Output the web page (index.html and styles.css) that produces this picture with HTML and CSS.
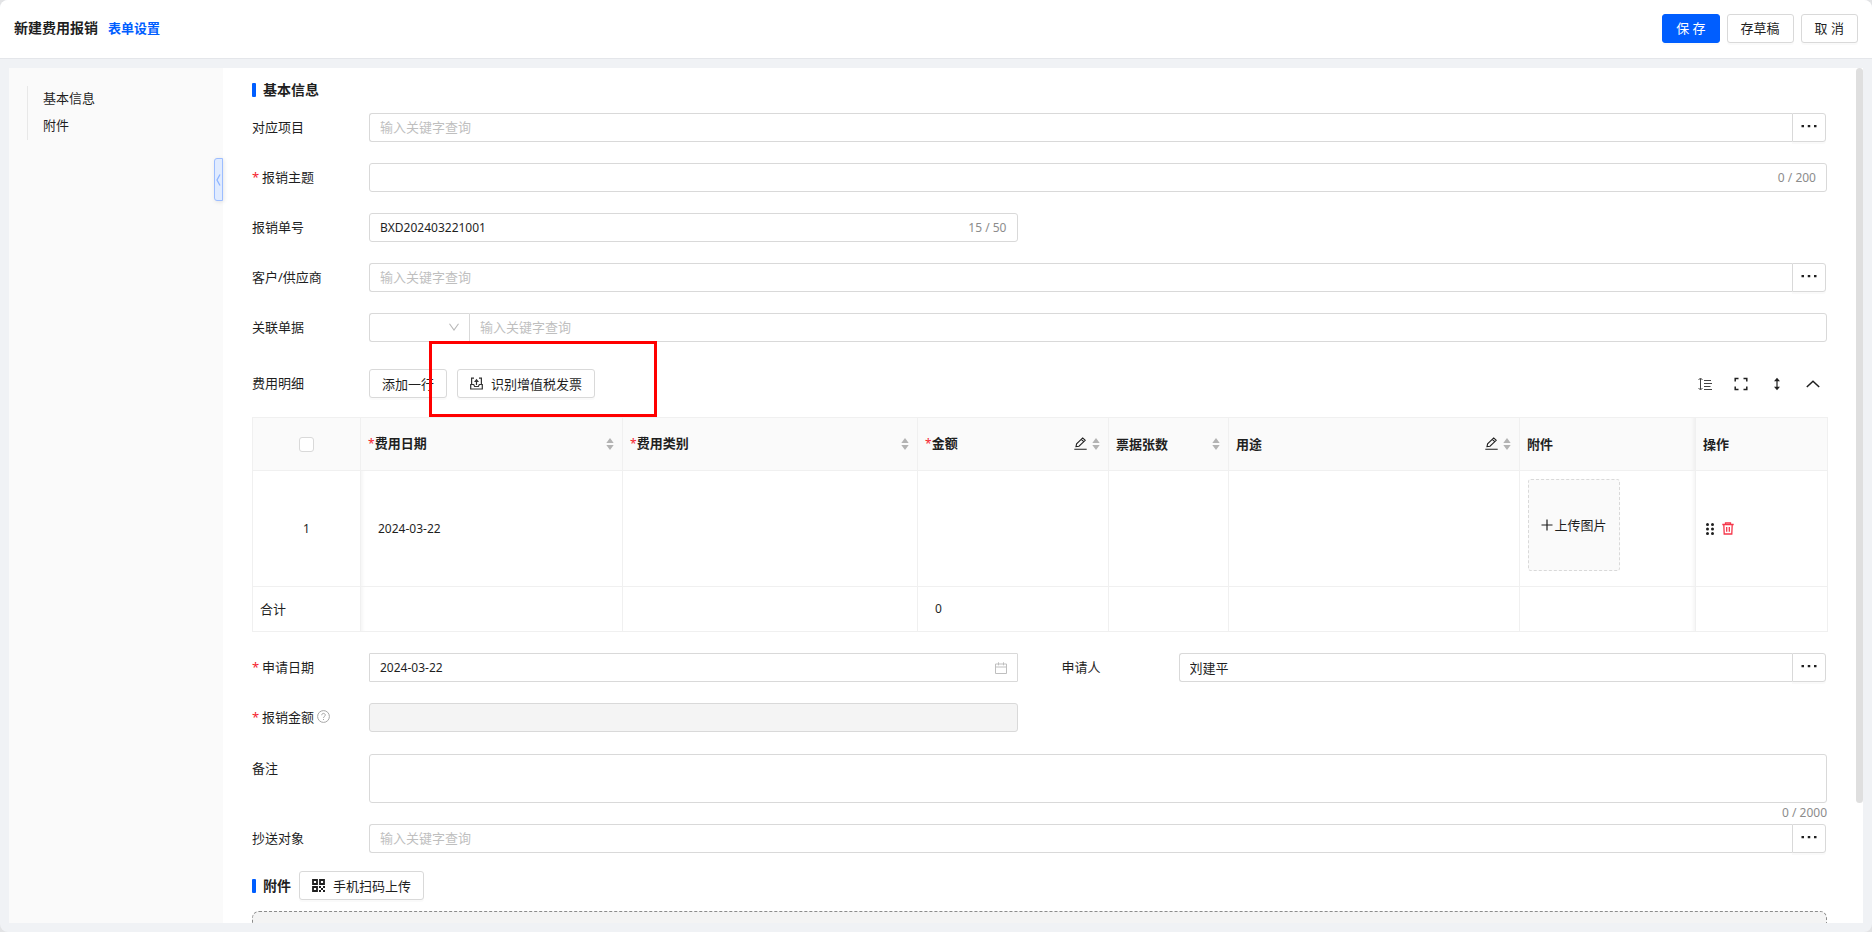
FILE: index.html
```html
<!DOCTYPE html>
<html lang="zh-CN">
<head>
<meta charset="utf-8">
<title>新建费用报销</title>
<link rel="stylesheet" href="styles.css">
</head>
<body>
<svg class="sprite" aria-hidden="true">
  <symbol id="sorter" viewBox="0 0 8 12"><path d="M4 0L7.700 5H.3zM4 12L.3 7H7.700z" fill="#b3b3b3"/></symbol>
  <symbol id="edit" viewBox="0 0 13 13"><path d="M.3 12.300H12.700M2 9.600L2.600 6.900 8.700.9 11.200 3.300 5 9.200zM7.300 2.300L9.700 4.600" fill="none" stroke="#1f1f1f" stroke-width="1.100"/></symbol>
  <symbol id="dots" viewBox="0 0 16 4"><path d="M.5 1H3V3.200H.5zM6.750 1H9.250V3.200H6.750zM13 1H15.500V3.200H13z" fill="#1f1f1f"/></symbol>
</svg>
<div class="app">
  <header class="topbar">
    <h1 class="topbar-title">新建费用报销</h1>
    <a class="topbar-link" href="#settings">表单设置</a>
    <div class="topbar-actions">
      <button class="btn btn-primary" type="button">保 存</button>
      <button class="btn" type="button">存草稿</button>
      <button class="btn" type="button">取 消</button>
    </div>
  </header>

  <div class="panel">
    <aside class="side">
      <nav class="anchors">
        <a href="#basic">基本信息</a>
        <a href="#files">附件</a>
      </nav>
      <button class="collapse" type="button" aria-label="收起">
        <svg width="5" height="12" viewBox="0 0 5 12"><path d="M4 .5L1 6l3 5.500" fill="none" stroke="#8fb5ff" stroke-width="1.300"/></svg>
      </button>
    </aside>

    <main class="content">
      <h2 class="section-title" id="basic">基本信息</h2>

      <form class="form">
        <div class="row">
          <label class="label" for="project">对应项目</label>
          <div class="group">
            <input class="field" id="project" type="text" placeholder="输入关键字查询">
            <button class="more" type="button" aria-label="更多"><svg width="16" height="4"><use href="#dots"/></svg></button>
          </div>
        </div>

        <div class="row">
          <label class="label required" for="subject">报销主题</label>
          <div class="box">
            <input class="bare" id="subject" type="text">
            <span class="count">0 / 200</span>
          </div>
        </div>

        <div class="halves">
          <div class="row">
            <label class="label" for="number">报销单号</label>
            <div class="box">
              <input class="bare" id="number" type="text" value="BXD202403221001">
              <span class="count">15 / 50</span>
            </div>
          </div>
        </div>

        <div class="row">
          <label class="label" for="customer">客户/供应商</label>
          <div class="group">
            <input class="field" id="customer" type="text" placeholder="输入关键字查询">
            <button class="more" type="button" aria-label="更多"><svg width="16" height="4"><use href="#dots"/></svg></button>
          </div>
        </div>

        <div class="row">
          <label class="label" for="related">关联单据</label>
          <div class="joined">
            <span class="select-wrap">
              <select class="select" aria-label="单据类型"><option></option></select>
              <svg class="select-arrow" width="10" height="8" viewBox="0 0 10 8"><path d="M.5 .8L5 7 9.500.8" fill="none" stroke="#b8b8b8" stroke-width="1.100"/></svg>
            </span>
            <input class="field" id="related" type="text" placeholder="输入关键字查询">
          </div>
        </div>

        <div class="detail">
          <div class="row">
            <span class="label">费用明细</span>
            <div class="toolbar">
              <button class="btn" type="button">添加一行</button>
              <div class="scan">
                <button class="btn" type="button">
                  <svg width="13" height="13" viewBox="0 0 13 13"><path d="M4 1.200H1.600V7.500M9 1.200H11.400V7.500M.7 7.500V12H12.300V7.500H9.300L8.400 9.500H4.600L3.700 7.500zM6.500 8V3.500" fill="none" stroke="#333" stroke-width="1.200"/><path d="M6.500 1.800L9 5H4z" fill="#333"/></svg>
                  识别增值税发票
                </button>
                <div class="highlight"></div>
              </div>
              <div class="tools">
                <button class="tool" type="button" aria-label="行高"><svg width="14" height="14" viewBox="0 0 14 14"><path d="M2.500 1.500V12.500M.5 3L2.500 1 4.500 3M.5 11L2.500 13 4.500 11M6 3.500H13M6 6.500H14M6 9.500H12.500M6 12.500H14" fill="none" stroke="#444"/></svg></button>
                <button class="tool" type="button" aria-label="全屏"><svg width="14" height="14" viewBox="0 0 14 14"><path d="M1.200 4.500V1.500H4.500M9.500 1.500H12.800V4.500M12.800 9.500V12.500H9.500M4.500 12.500H1.200V9.500" fill="none" stroke="#1f1f1f" stroke-width="1.500"/></svg></button>
                <button class="tool" type="button" aria-label="高度"><svg width="14" height="14" viewBox="0 0 14 14"><path d="M7 2V12" stroke="#1f1f1f" stroke-width="1.200"/><path d="M7 .8L10 4.200H4zM7 13.200L4 9.800H10z" fill="#1f1f1f"/></svg></button>
                <button class="tool" type="button" aria-label="折叠"><svg width="14" height="14" viewBox="0 0 14 14"><path d="M.8 10L7 4.200 13.200 10" fill="none" stroke="#1f1f1f" stroke-width="1.500"/></svg></button>
              </div>
            </div>
          </div>

          <table class="table">
            <colgroup>
              <col class="col-check"><col class="col-date"><col class="col-type"><col class="col-amount"><col class="col-bills"><col class="col-usage"><col class="col-files"><col class="col-ops">
            </colgroup>
            <thead>
              <tr>
                <th class="fixed-left"><input class="check" type="checkbox" aria-label="全选"></th>
                <th><div class="th"><span class="must">费用日期</span><svg class="sorter" width="8" height="12"><use href="#sorter"/></svg></div></th>
                <th><div class="th"><span class="must">费用类别</span><svg class="sorter" width="8" height="12"><use href="#sorter"/></svg></div></th>
                <th><div class="th"><span class="must">金额</span><svg width="13" height="13"><use href="#edit"/></svg><svg class="sorter" width="8" height="12"><use href="#sorter"/></svg></div></th>
                <th><div class="th"><span>票据张数</span><svg class="sorter" width="8" height="12"><use href="#sorter"/></svg></div></th>
                <th><div class="th"><span>用途</span><svg width="13" height="13"><use href="#edit"/></svg><svg class="sorter" width="8" height="12"><use href="#sorter"/></svg></div></th>
                <th class="before-ops">附件</th>
                <th class="ops">操作</th>
              </tr>
            </thead>
            <tbody>
              <tr>
                <td class="center">1</td>
                <td class="value after-check">2024-03-22</td>
                <td></td><td></td><td></td><td></td>
                <td class="before-ops">
                  <button class="upload" type="button"><svg width="12" height="12" viewBox="0 0 12 12"><path d="M6 .5V11.500M.5 6H11.500" stroke="#1f1f1f" stroke-width="1.200"/></svg>上传图片</button>
                </td>
                <td class="ops">
                  <div class="ops-icons">
                    <svg width="10" height="14" viewBox="0 0 10 14"><g fill="#1f1f1f"><circle cx="2.500" cy="2.500" r="1.500"/><circle cx="7.500" cy="2.500" r="1.500"/><circle cx="2.500" cy="7" r="1.500"/><circle cx="7.500" cy="7" r="1.500"/><circle cx="2.500" cy="11.500" r="1.500"/><circle cx="7.500" cy="11.500" r="1.500"/></g></svg>
                    <button class="tool" type="button" aria-label="删除"><svg width="12" height="13" viewBox="0 0 12 13"><path d="M.3 2.500H11.700M3.500 2.500V.9H8.500V2.500M1.800 2.500L2.200 12H9.800L10.200 2.500M4.700 5V9.800M7.300 5V9.800" fill="none" stroke="#f5364a" stroke-width="1.300"/></svg></button>
                  </div>
                </td>
              </tr>
            </tbody>
            <tfoot>
              <tr>
                <td>合计</td><td class="after-check"></td><td></td><td class="value">0</td><td></td><td></td><td class="before-ops"></td><td class="ops"></td>
              </tr>
            </tfoot>
          </table>
        </div>

        <div class="halves">
          <div class="row">
            <label class="label required" for="date">申请日期</label>
            <div class="box square">
              <input class="bare" id="date" type="text" value="2024-03-22">
              <svg width="12" height="12" viewBox="0 0 12 12"><path d="M.5 2H11.500V11.500H.5zM.5 5H11.500M3.500.3V3.300M8.500.3V3.300" fill="none" stroke="#bfbfbf"/></svg>
            </div>
          </div>
          <div class="row">
            <label class="label" for="applicant">申请人</label>
            <div class="group">
              <input class="field name" id="applicant" type="text" value="刘建平">
              <button class="more" type="button" aria-label="更多"><svg width="16" height="4"><use href="#dots"/></svg></button>
            </div>
          </div>
        </div>

        <div class="halves">
          <div class="row">
            <label class="label required" for="total">报销金额
              <svg width="13" height="13" viewBox="0 0 13 13"><g fill="none" stroke="#a6a6a6"><circle cx="6.500" cy="6.500" r="5.900"/><path d="M4.700 5.200C4.700 2.800 8.300 2.800 8.300 5.100 8.300 6.300 6.500 6.500 6.500 8M6.500 9V10"/></g></svg>
            </label>
            <input class="field" id="total" type="text" disabled>
          </div>
        </div>

        <div class="row remark">
          <label class="label" for="remark">备注</label>
          <div class="area">
            <textarea class="textarea" id="remark"></textarea>
            <span class="count">0 / 2000</span>
          </div>
        </div>

        <div class="row">
          <label class="label" for="copy">抄送对象</label>
          <div class="group">
            <input class="field" id="copy" type="text" placeholder="输入关键字查询">
            <button class="more" type="button" aria-label="更多"><svg width="16" height="4"><use href="#dots"/></svg></button>
          </div>
        </div>
      </form>

      <div class="files-head" id="files">
        <h2 class="section-title">附件</h2>
        <button class="btn" type="button">
          <svg width="13" height="13" viewBox="0 0 13 13"><path d="M1 1H5V5H1zM8 1H12V5H8zM1 8H5V12H1z" fill="none" stroke="#1f1f1f" stroke-width="1.800"/><path d="M7 7H9V9H11V7H13V9H11V11H13V13H11V11H9V13H7V11H9V9H7z" fill="#1f1f1f"/></svg>
          手机扫码上传
        </button>
      </div>
      <div class="dropzone"></div>
    </main>
    <div class="scrollbar"><div class="thumb"></div></div>
  </div>
</div>
</body>
</html>
```
FILE: styles.css
```css
* { box-sizing: border-box; }

body {
  margin: 0;
  background: #e2e3e5;
  color: #1f1f1f;
  font: 13px/20px "Noto Sans", "Noto Sans CJK SC", sans-serif;
}

button, input, select, textarea { font: inherit; color: inherit; margin: 0; }
svg { display: block; flex: none; }
a { color: inherit; text-decoration: none; }
.sprite { position: absolute; width: 0; height: 0; }

.app {
  height: 100vh;
  display: flex;
  flex-direction: column;
  background: #f0f2f5;
  border-radius: 8px;
  overflow: hidden;
}

.topbar {
  display: flex;
  align-items: center;
  height: 59px;
  padding: 0 14px 2px;
  background: #fff;
  border-bottom: 1px solid #e4e6ea;
}
.topbar-title { margin: 0 10px 0 0; font-size: 14px; font-weight: 600; }
.topbar-link { color: #005eff; font-weight: 600; }
.topbar-actions { display: flex; gap: 7px; margin-left: auto; }
.topbar-actions .btn { padding: 0 13px; }

.btn {
  display: flex;
  align-items: center;
  gap: 8px;
  height: 29px;
  padding: 0 12px;
  border: 1px solid #d9d9d9;
  border-radius: 3px;
  background: #fff;
  box-shadow: 0 2px 0 rgba(0, 0, 0, .02);
  white-space: nowrap;
}
.btn-primary { background: #005eff; border-color: #005eff; color: #fff; }

.panel {
  flex: 1;
  min-height: 0;
  display: flex;
  margin: 9px;
  background: #fff;
}

.side {
  position: relative;
  width: 214px;
  flex: none;
  padding: 18px;
  background: #fafafa;
}
.anchors {
  display: flex;
  flex-direction: column;
  gap: 7px;
  padding: 2px 0 5px 15px;
  border-left: 1px solid #e8e8e8;
}
.collapse {
  position: absolute;
  top: 90px;
  right: 0;
  width: 9px;
  height: 43px;
  display: flex;
  align-items: center;
  justify-content: center;
  padding: 0;
  border: 1px solid #9cbdff;
  border-radius: 3px 0 0 3px;
  background: #e0ebff;
  box-shadow: 1px 1px 4px rgba(0, 0, 0, .1);
}

.content {
  flex: 1;
  min-width: 0;
  overflow: hidden;
  padding: 12px 29px 0;
}
.section-title {
  display: flex;
  align-items: center;
  gap: 7px;
  margin: 0;
  font-size: 14px;
  font-weight: 600;
}
.section-title::before {
  content: "";
  width: 4px;
  height: 14px;
  border-radius: 1px;
  background: #005eff;
}

.form { display: flex; flex-direction: column; gap: 21px; margin-top: 13px; }
.row { display: grid; grid-template-columns: 117px minmax(0, 1fr); align-items: center; }
.halves { display: grid; grid-template-columns: 1fr 1fr; gap: 44px; }

.label { display: flex; align-items: center; gap: 3px; padding-bottom: 2px; white-space: nowrap; }
.required::before { content: "*"; width: 7px; color: #f5222d; }

.field, .box, .select, .textarea {
  width: 100%;
  border: 1px solid #d9d9d9;
  border-radius: 3px;
  background: #fff;
  outline: none;
}
.field { height: 29px; padding: 0 10px 1px; }
.field:disabled { background: #f4f4f4; }
.box { display: flex; align-items: center; height: 29px; padding: 0 10px; }
.square { border-radius: 1px; }
.bare { flex: 1; min-width: 0; padding: 0; border: 0; outline: none; background: none; font-size: 12px; }
.count { color: #8c8c8c; font-size: 12px; }
::placeholder { color: #bfbfbf; opacity: 1; }

.group { display: flex; margin-right: 1px; }
.group .field { flex: 1; border-radius: 3px 0 0 3px; border-right: 0; }
.more {
  display: flex;
  justify-content: center;
  width: 34px;
  height: 29px;
  padding: 10px 0 0;
  border: 1px solid #d9d9d9;
  border-radius: 0 3px 3px 0;
  background: #fff;
  box-shadow: 0 2px 0 rgba(0, 0, 0, .02);
}

.joined { display: flex; }
.joined .field { flex: 1; border-radius: 0 3px 3px 0; }
.select-wrap { position: relative; width: 100px; flex: none; }
.select { display: block; height: 29px; appearance: none; border-right: 0; border-radius: 3px 0 0 3px; }
.select-arrow { position: absolute; right: 10px; top: 10px; pointer-events: none; }

.detail { padding: 6px 0 0; }
.toolbar { display: flex; align-items: center; gap: 10px; }
.scan { position: relative; }
.highlight {
  position: absolute;
  left: -28px;
  top: -28px;
  width: 228px;
  height: 76px;
  border: 3px solid #f00;
  pointer-events: none;
}
.tools { display: flex; gap: 22px; margin: 0 7px 0 auto; }
.tool { padding: 0; border: 0; background: none; }

.table {
  width: 100%;
  margin-top: 19px;
  table-layout: fixed;
  border-collapse: collapse;
}
.table th, .table td { border: 1px solid #f0f0f0; padding: 0 8px 0 7px; text-align: left; }
.table th { height: 53px; padding-bottom: 1px; background: #fafafa; font-weight: 600; }
.table tbody td { height: 116px; }
.table tfoot td { height: 45px; }
.col-check { width: 108px; }
.col-date { width: 262px; }
.col-type { width: 295px; }
.col-amount { width: 191px; }
.col-bills { width: 120px; }
.col-usage { width: 291px; }
.col-files { width: 176px; }
.col-ops { width: 132px; }
.table .fixed-left, .table .center { text-align: center; padding: 0; }
.table .center, .table .value { font-size: 12px; }
.table .value { padding-left: 17px; }
.after-check { box-shadow: inset 5px 0 4px -4px rgba(0, 0, 0, .06); }
.before-ops { box-shadow: inset -5px 0 4px -4px rgba(0, 0, 0, .06); }
.th { display: flex; align-items: center; gap: 5px; }
.th span { flex: 1; }
.must::before { content: "*"; color: #f5222d; font-size: 12px; font-weight: 400; }
.check {
  display: block;
  width: 15px;
  height: 15px;
  margin: 0 auto;
  appearance: none;
  border: 1px solid #d9d9d9;
  border-radius: 3px;
  background: #fff;
}
.upload {
  display: flex;
  align-items: center;
  justify-content: center;
  gap: 1px;
  width: 92px;
  height: 92px;
  margin: 0 0 7px 1px;
  padding: 0;
  border: 1px dashed #d9d9d9;
  border-radius: 3px;
  background: #fafafa;
}
.ops-icons { display: flex; align-items: center; gap: 7px; padding-left: 2px; }

.remark { align-items: start; padding-top: 1px; }
.remark .label { height: 29px; }
.area { display: flex; flex-direction: column; align-items: flex-end; }
.textarea { display: block; height: 49px; padding: 4px 10px; resize: none; }
.area .count { height: 21px; margin-bottom: -21px; }

.files-head { display: flex; align-items: center; gap: 8px; margin-top: 18px; }
.dropzone {
  height: 120px;
  margin-top: 11px;
  border: 1px dashed #8c8c8c;
  border-radius: 7px;
  background: #f4f4f4;
}

.scrollbar { width: 7px; flex: none; }
.thumb { height: 86%; border-radius: 4px; background: #dfdfdf; }
```
